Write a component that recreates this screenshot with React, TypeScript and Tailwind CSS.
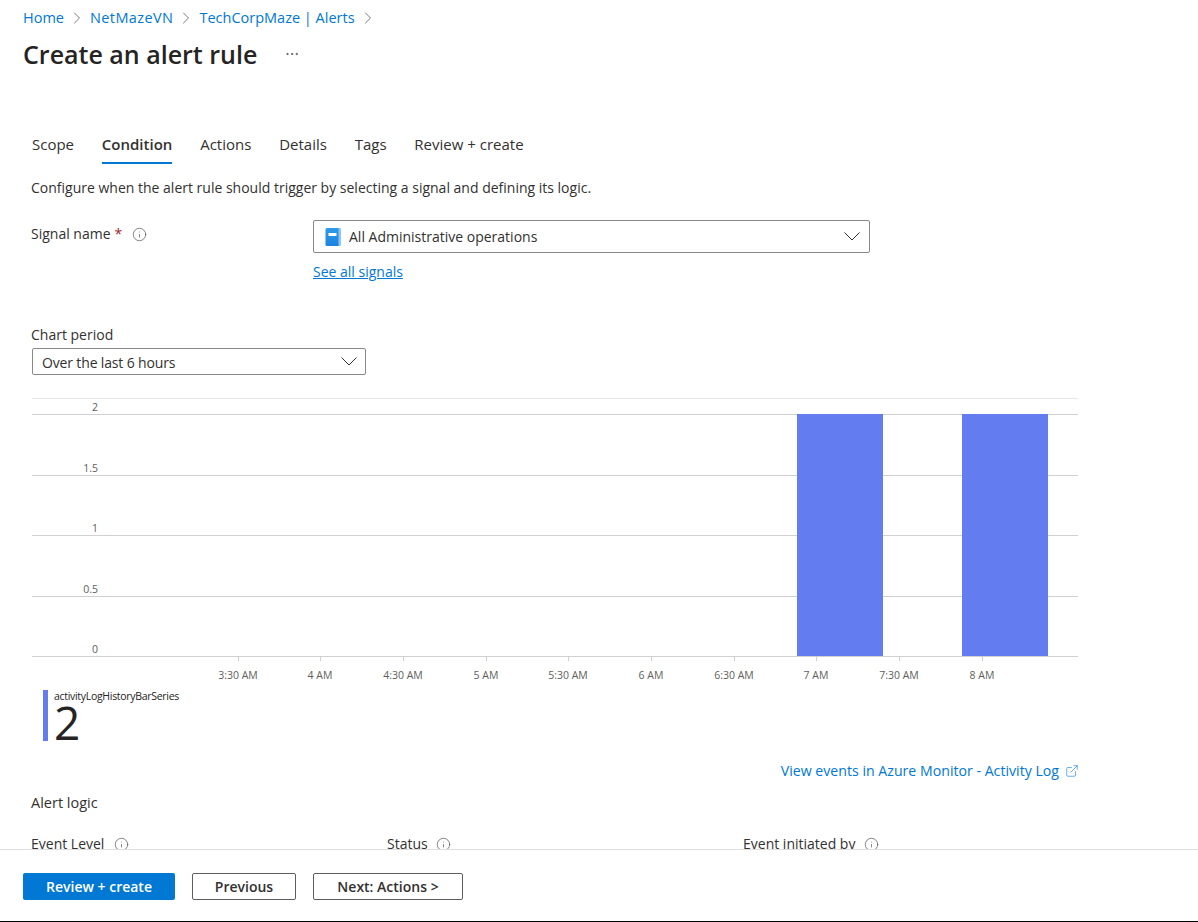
import { ChevronRight, ExternalLink, Info, MoreHorizontal } from "lucide-react";

const crumbs = [
  { label: "Home", className: "" },
  { label: "NetMazeVN", className: "tracking-[0.4px]" },
  { label: "TechCorpMaze | Alerts", className: "" },
];
const tabs = ["Scope", "Condition", "Actions", "Details", "Tags", "Review + create"];

const yTicks = [
  { y: 414, label: "2" },
  { y: 475, label: "1.5" },
  { y: 535, label: "1" },
  { y: 596, label: "0.5" },
  { y: 656, label: "0" },
];
const xTicks = [
  { x: 238, label: "3:30 AM" },
  { x: 320, label: "4 AM" },
  { x: 403, label: "4:30 AM" },
  { x: 486, label: "5 AM" },
  { x: 568, label: "5:30 AM" },
  { x: 651, label: "6 AM" },
  { x: 734, label: "6:30 AM" },
  { x: 816, label: "7 AM" },
  { x: 899, label: "7:30 AM" },
  { x: 982, label: "8 AM" },
];

function Chart() {
  // svg coords are page coords minus the 32,398 origin of the chart
  return (
    <svg width="1078" height="292" className="block -ml-[32px]" viewBox="0 398 1078 292">
      <line x1="32" x2="1078" y1="398.5" y2="398.5" stroke="#e6e6e6" />
      {yTicks.map((t) => (
        <g key={t.label}>
          <line x1="32" x2="1078" y1={t.y + 0.5} y2={t.y + 0.5} stroke="#d0d0d0" />
          <text x="98" y={t.y - 3} textAnchor="end" fontSize="10.5" fill="#605e5c" fontFamily="Open Sans, sans-serif">
            {t.label}
          </text>
        </g>
      ))}
      <rect x="797" y="414" width="86" height="242" fill="#637cef" />
      <rect x="962" y="414" width="86" height="242" fill="#637cef" />
      {xTicks.map((t) => (
        <g key={t.label}>
          <line x1={t.x + 0.5} x2={t.x + 0.5} y1="656" y2="661" stroke="#d0d0d0" />
          <text x={t.x} y="679" textAnchor="middle" fontSize="10.5" fill="#605e5c" fontFamily="Open Sans, sans-serif">
            {t.label}
          </text>
        </g>
      ))}
    </svg>
  );
}

function InfoIcon({ className }: { className?: string }) {
  return <Info size={15} strokeWidth={1.2} className={"text-[#605e5c] " + (className ?? "")} />;
}

function Caret() {
  return (
    <svg width="16" height="9" viewBox="0 0 16 9" className="shrink-0 text-[#323130]">
      <path d="M0.5 0.5L8 8L15.5 0.5" fill="none" stroke="currentColor" strokeWidth="1" />
    </svg>
  );
}

function BookIcon() {
  return (
    <svg width="16" height="20" viewBox="0 0 16 20" className="shrink-0">
      <defs>
        <linearGradient id="book" x1="0" y1="0" x2="0" y2="1">
          <stop offset="0" stopColor="#2f9be8" />
          <stop offset="1" stopColor="#1b83e0" />
        </linearGradient>
      </defs>
      <rect x="0.5" y="1" width="15" height="18" rx="1.5" fill="url(#book)" />
      <rect x="13.5" y="1" width="2" height="18" fill="#8cc4f7" />
      <rect x="3.5" y="6" width="8" height="3" fill="#ffffff" />
    </svg>
  );
}

export default function App() {
  return (
    <div className="flex h-[922px] w-[1198px] flex-col overflow-hidden border-b border-black bg-white font-['Open_Sans',sans-serif] text-[14px] text-[#323130]">
      <main className="relative flex-1 overflow-hidden">
        <nav className="flex h-[34px] items-center pl-[23px] pt-[1px] text-[14.5px] text-[#0078d4]">
          {crumbs.map((c) => (
            <div key={c.label} className="flex items-center">
              <span className={c.className}>{c.label}</span>
              <ChevronRight size={20} strokeWidth={1} className="mx-[3px] text-[#605e5c]" />
            </div>
          ))}
        </nav>

        <div className="flex items-center pl-[23px] pt-[1px]">
          <h1 className="text-[25px] font-semibold leading-[38px] text-[#252423]">Create an alert rule</h1>
          <MoreHorizontal size={16} strokeWidth={1} className="ml-[27px] text-[#323130]" />
        </div>

        <div className="px-[32px]">
          <div className="mt-[59px] flex gap-[27.8px] text-[15px]">
            {tabs.map((t) => (
              <div
                key={t}
                className={
                  t === "Condition"
                    ? "h-[32px] border-b-2 border-[#0078d4] pt-[1px] font-semibold text-[#323130]"
                    : "h-[32px] pt-[1px]"
                }
              >
                {t}
              </div>
            ))}
          </div>

          <p className="mt-[14px] -ml-[1px] leading-[20px]">Configure when the alert rule should trigger by selecting a signal and defining its logic.</p>

          <div className="mt-[22px] flex">
            <div className="flex w-[281px] items-center self-start pt-[4px] leading-[20px]">
              <div className="-ml-[1px] flex items-center">
                <span>Signal name</span>
                <span className="ml-[4px] text-[#a4262c]">*</span>
                <InfoIcon className="ml-[10px]" />
              </div>
            </div>
            <div>
              <div className="flex h-[33px] w-[557px] items-center rounded-[2px] border border-[#8a8886] pl-[11px] pr-[9px]">
                <BookIcon />
                <span className="ml-[8px] flex-1">All Administrative operations</span>
                <Caret />
              </div>
              <a className="mt-[9px] block leading-[20px] text-[#0078d4] underline">See all signals</a>
            </div>
          </div>

          <div className="mt-[43px] -ml-[1px] leading-[20px]">Chart period</div>
          <div className="mt-[3px] flex h-[27px] w-[334px] items-center rounded-[2px] border border-[#8a8886] pl-[9px] pr-[8px]">
            <span className="flex-1 pt-[1px] tracking-[-0.15px]">Over the last 6 hours</span>
            <Caret />
          </div>

          <div className="mt-[23px]">
            <Chart />
          </div>

          <div className="ml-[11px] flex h-[51px] items-stretch">
            <div className="w-[5px] bg-[#637cef]" />
            <div className="ml-[6px] h-[51px] overflow-hidden">
              <div className="text-[10.5px] leading-[13px] tracking-[-0.3px] text-[#252423]">activityLogHistoryBarSeries</div>
              <div className="text-[46px] font-[500] leading-[38px] text-[#252423]">2</div>
            </div>
          </div>

          <div className="mt-[19px] flex w-[1048px] items-center justify-end text-[14.15px] text-[#0078d4]">
            <span>View events in Azure Monitor - Activity Log</span>
            <ExternalLink size={14} strokeWidth={1} className="ml-[6px] mr-[1px]" />
          </div>

          <div className="mt-[12px] -ml-[1px] text-[14.5px] leading-[20px]">Alert logic</div>

          <div className="mt-[21px] -ml-[1px] grid w-[1068px] grid-cols-3 leading-[20px]">
            <div className="flex items-center gap-[10px]">
              <span>Event Level</span>
              <InfoIcon />
            </div>
            <div className="flex items-center gap-[8px]">
              <span>Status</span>
              <InfoIcon />
            </div>
            <div className="flex items-center gap-[9px]">
              <span>Event initiated by</span>
              <InfoIcon />
            </div>
          </div>
        </div>
      </main>

      <footer className="flex h-[72px] shrink-0 items-start gap-[17px] border-t border-[#e1dfdd] bg-white pl-[23px] pt-[23px] font-semibold">
        <button className="h-[27px] w-[152px] rounded-[2px] bg-[#0078d4] text-white">Review + create</button>
        <button className="h-[27px] w-[104px] rounded-[2px] border border-[#605e5c]">Previous</button>
        <button className="h-[27px] w-[150px] rounded-[2px] border border-[#605e5c]">Next: Actions &gt;</button>
      </footer>
    </div>
  );
}
